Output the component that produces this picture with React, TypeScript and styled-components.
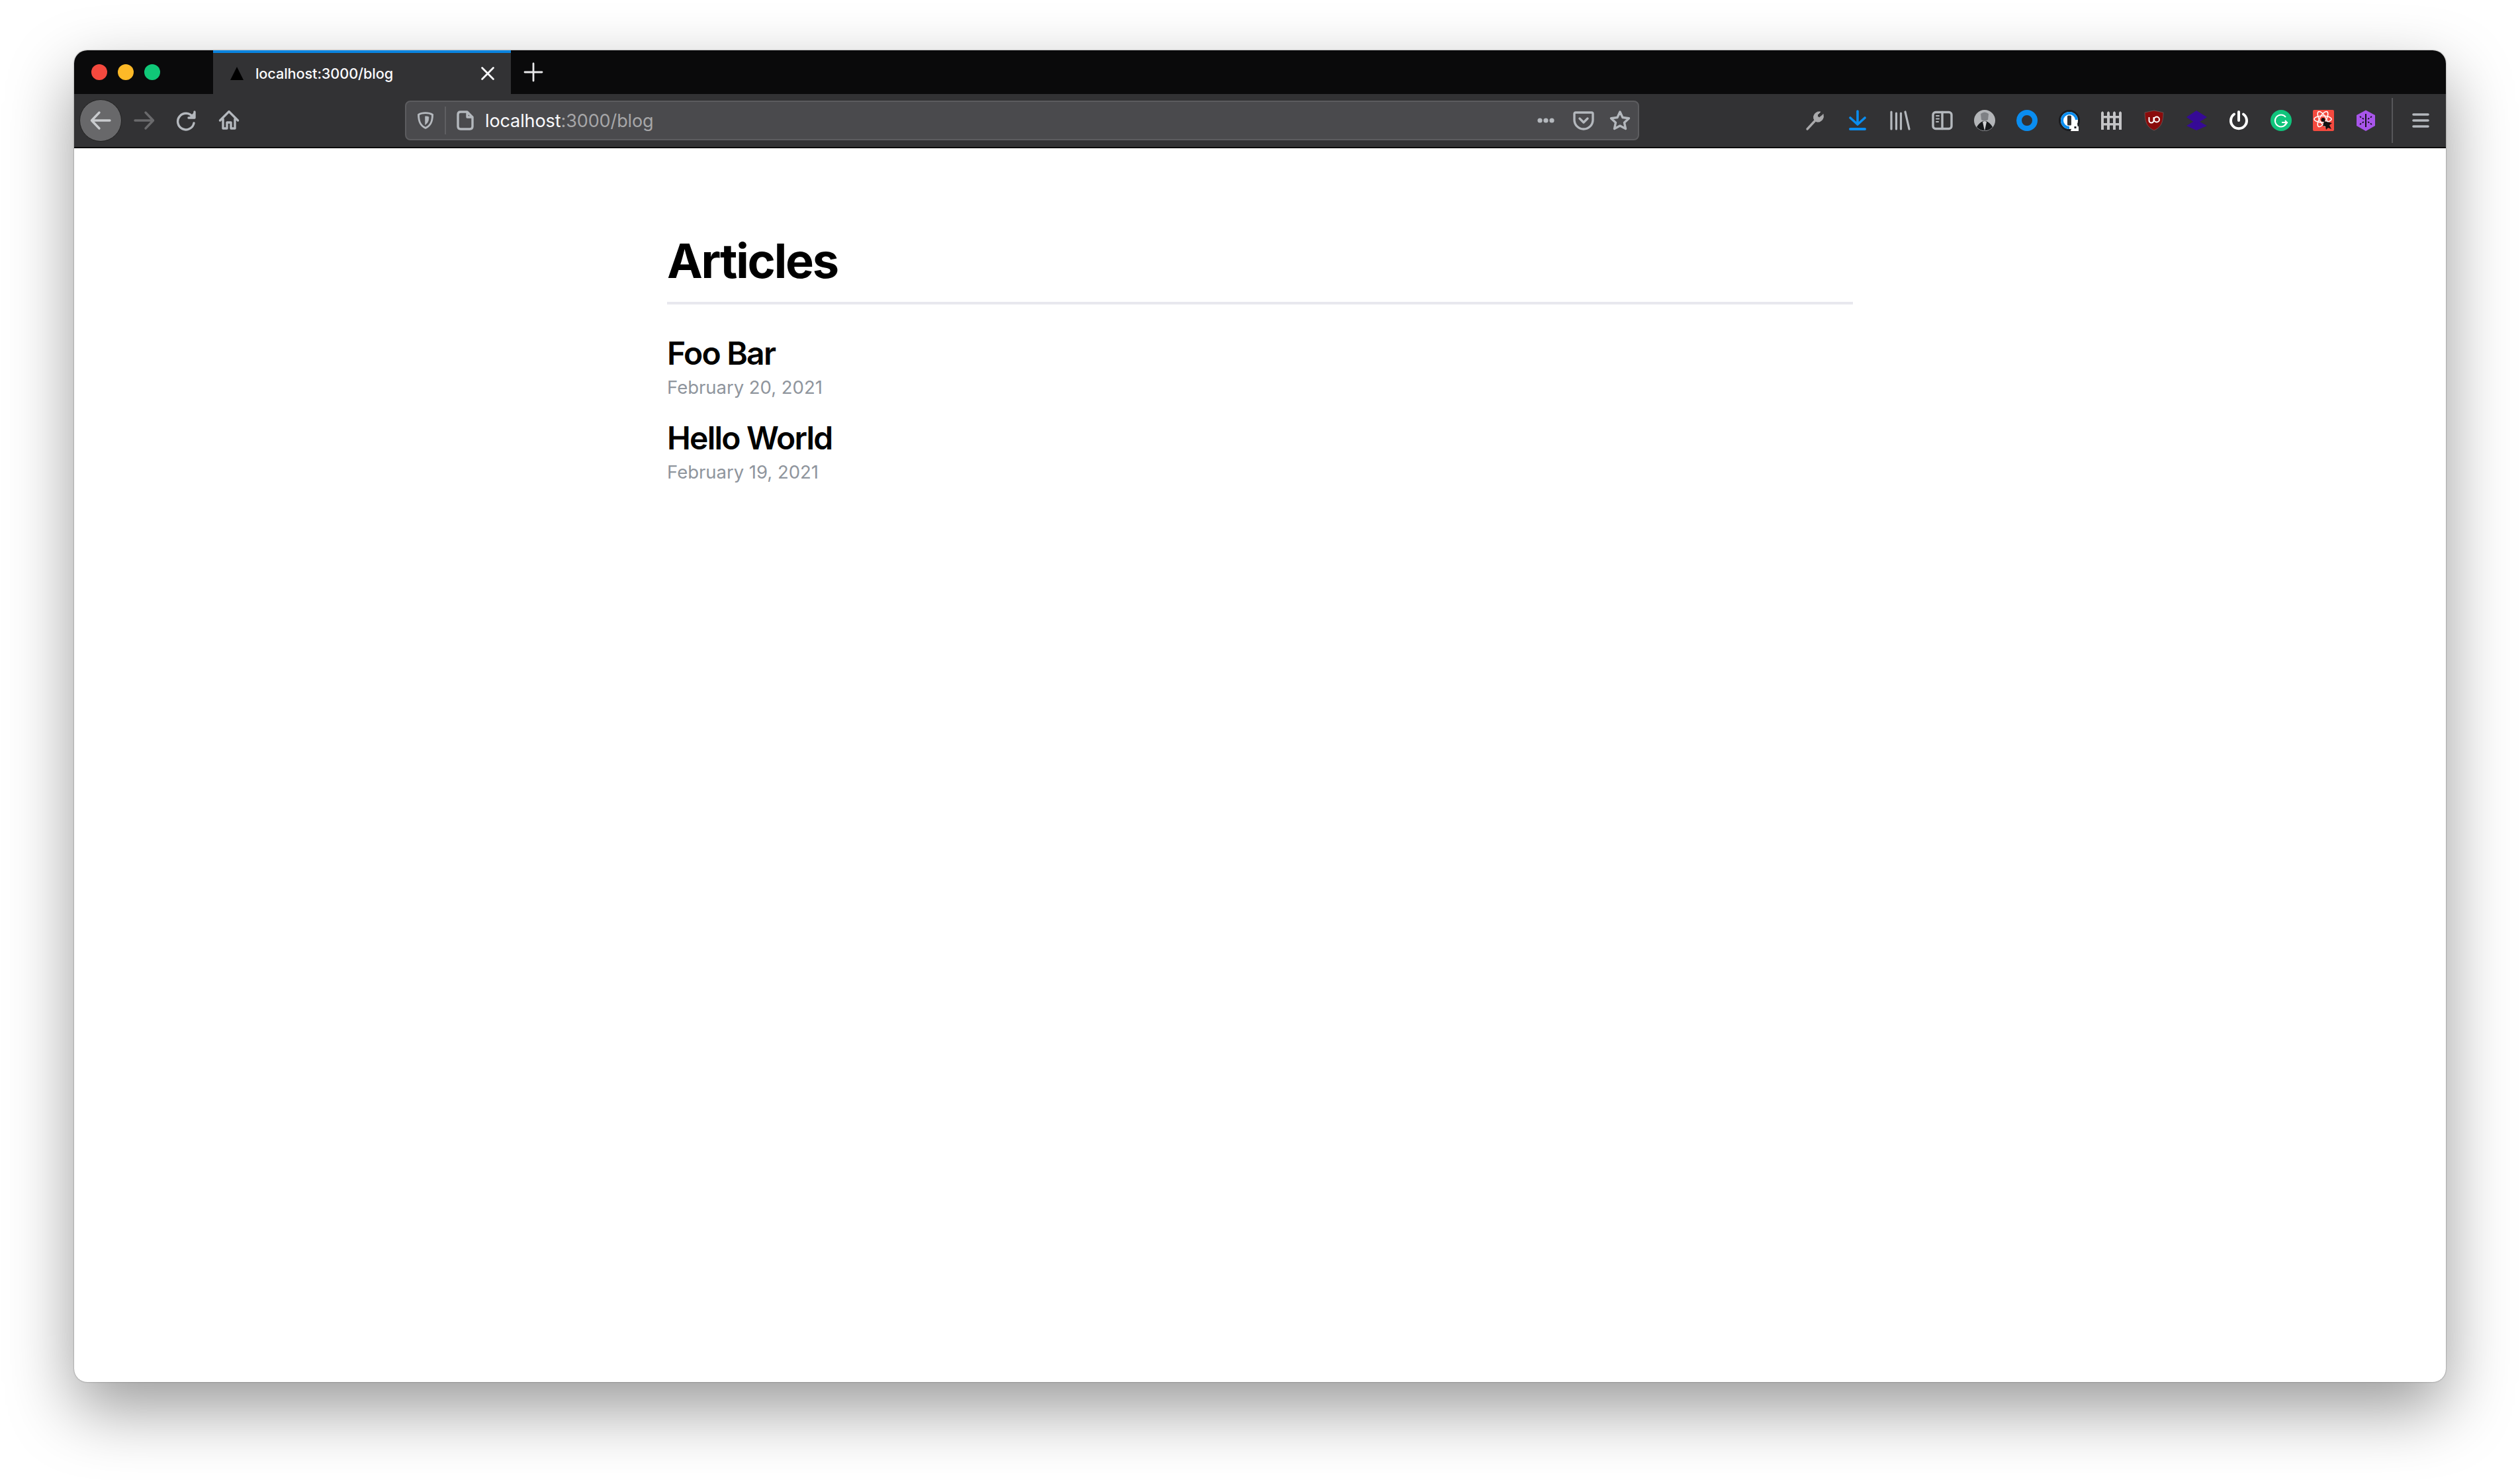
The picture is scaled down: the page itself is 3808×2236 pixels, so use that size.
import React from "react";
import styled, { createGlobalStyle } from "styled-components";

const Global = createGlobalStyle`
  html, body { margin: 0; padding: 0; background: #fff; }
  body { font-family: Inter, "Liberation Sans", sans-serif; }
  * { box-sizing: border-box; }
`;

const Page = styled.div`
  width: 3808px;
  height: 2236px;
  padding: 76px 112px 148px;
  background: #fff;
  overflow: hidden;
`;
const Window = styled.div`
  height: 2012px;
  display: flex;
  flex-direction: column;
  background: #fff;
  border-radius: 20px;
  overflow: hidden;
  box-shadow: 0 40px 100px rgba(0, 0, 0, 0.4), 0 0 2px rgba(0, 0, 0, 0.5);
`;
const TitleBar = styled.div`
  height: 66px;
  flex: none;
  display: flex;
  background: #0a0a0b;
`;
const Lights = styled.div`
  width: 210px;
  display: flex;
  align-items: center;
  gap: 16px;
  padding-left: 26px;
`;
const Light = styled.span<{ $c: string }>`
  width: 24px;
  height: 24px;
  border-radius: 50%;
  background: ${(p) => p.$c};
`;
const Tab = styled.div`
  width: 450px;
  display: flex;
  align-items: center;
  padding: 0 0 0 26px;
  background: #323234;
  border-top: 4px solid #0a84e0;
  color: #fbfbfe;
  font-size: 21.7px;
  font-weight: 500;
  letter-spacing: -0.1px;
`;
const TabTitle = styled.span`
  margin-left: 18px;
  flex: 1;
`;
const TabClose = styled.span`
  width: 30px;
  height: 30px;
  margin-right: 20px;
  display: flex;
`;
const NewTab = styled.span`
  width: 68px;
  display: flex;
  align-items: center;
  justify-content: center;
`;
const ToolBar = styled.div`
  height: 82px;
  flex: none;
  display: flex;
  align-items: center;
  padding: 0 6px 0 8px;
  background: #323234;
  border-bottom: 2px solid #0a0a0b;
`;
const BackButton = styled.span`
  width: 64px;
  height: 64px;
  flex: none;
  border-radius: 50%;
  background: #68686a;
  border: 1px solid #222;
  display: flex;
  align-items: center;
  justify-content: center;
  margin-right: 2px;
`;
const Cell = styled.span`
  width: 64px;
  height: 64px;
  flex: none;
  display: flex;
  align-items: center;
  justify-content: center;
`;
const UrlBar = styled.div`
  width: 1865px;
  height: 60px;
  margin: 0 234px;
  flex: none;
  display: flex;
  align-items: center;
  background: #4a4a4d;
  border: 2px solid #5c5c5f;
  border-radius: 8px;
`;
const UrlIcon = styled.span<{ $w: number }>`
  width: ${(p) => p.$w}px;
  flex: none;
  display: flex;
  align-items: center;
  justify-content: center;
`;
const UrlDivider = styled.span`
  width: 2px;
  height: 42px;
  background: #5f5f62;
  flex: none;
`;
const UrlText = styled.span`
  flex: 1;
  margin-left: 1px;
  font-size: 27px;
  color: #a6a6a8;
  letter-spacing: -0.1px;
`;
const UrlHost = styled.span`
  color: #fbfbfe;
`;
const ToolSep = styled.span`
  width: 2px;
  height: 68px;
  margin: 0 10px 0 7px;
  background: #57575a;
  flex: none;
`;
const Main = styled.main`
  flex: 1;
  width: 1792px;
  margin: 0 auto;
  color: #000;
`;
const Heading = styled.h1`
  margin: 0;
  padding: 130px 0 0;
  height: 236px;
  border-bottom: 4px solid #e8e8ee;
  font-size: 72px;
  line-height: 80px;
  font-weight: 700;
  letter-spacing: -2.2px;
`;
const Article = styled.article`
  display: flex;
  flex-direction: column;
  margin-bottom: 25px;
  &:first-of-type { margin-top: 44px; }
`;
const ArticleTitle = styled.h2`
  margin: 0;
  font-size: 48px;
  line-height: 60px;
  font-weight: 600;
  letter-spacing: -1.75px;
`;
const ArticleDate = styled.time`
  font-size: 27.5px;
  line-height: 43px;
  color: #8f959d;
  letter-spacing: -0.02px;
`;

type P = { children: React.ReactNode; s?: number; c?: string; w?: number };
const Ic = ({ children, s = 32, c = "#b4b8bd", w = 3.4 }: P) => (
  <svg width={s} height={s} viewBox="0 0 32 32" fill="none" stroke={c} strokeWidth={w} strokeLinecap="round" strokeLinejoin="round">
    {children}
  </svg>
);

export default function App() {
  return (
    <Page>
      <Global />
      <Window>
        <TitleBar>
          <Lights>
            <Light $c="#f4493e" />
            <Light $c="#fdb927" />
            <Light $c="#10c878" />
          </Lights>
          <Tab>
            <svg width="20" height="20" viewBox="0 0 20 20"><path d="M10 0 L20 20 H0 Z" fill="#000" /></svg>
            <TabTitle>localhost:3000/blog</TabTitle>
            <TabClose>
              <Ic s={30} c="#fbfbfe" w={3}><path d="M7 7 L25 25 M25 7 L7 25" /></Ic>
            </TabClose>
          </Tab>
          <NewTab>
            <Ic s={32} c="#e8e8ea" w={2.8}><path d="M16 3 V29 M3 16 H29" /></Ic>
          </NewTab>
        </TitleBar>
        <ToolBar>
          <BackButton>
            <Ic c="#c9cbce"><path d="M30 16 H2.5 M14 4 L2.5 16 L14 28" /></Ic>
          </BackButton>
          <Cell>
            <Ic c="#6a6a6c"><path d="M2 16 H29.5 M18 4 L29.5 16 L18 28" /></Ic>
          </Cell>
          <Cell>
            <Ic><path d="M25 10.5 A12.3 12.3 0 1 0 27 20" /><path d="M28 3 V12 H19" fill="#b4b8bd" /></Ic>
          </Cell>
          <Cell>
            <Ic><path d="M2.5 16 L16 2.5 L29.5 16 M7 13 V28 H13 V19 H19 V28 H25 V13" /></Ic>
          </Cell>
          <UrlBar>
            <UrlIcon $w={58}>
              <Ic s={28}><path d="M16 3 C21 3 25 4 28 6 C28 18 25 25 16 29 C7 25 4 18 4 6 C7 4 11 3 16 3 Z" /><path d="M16 9 C18 9 20 9 21.5 10 C21.5 16 20 20 16 23 Z" fill="#b4b8bd" strokeWidth={1} /></Ic>
            </UrlIcon>
            <UrlDivider />
            <UrlIcon $w={58}>
              <Ic s={32}><path d="M19 3 H9 Q5 3 5 7 V25 Q5 29 9 29 H23 Q27 29 27 25 V11 Z M19 3 V11 H27" /></Ic>
            </UrlIcon>
            <UrlText><UrlHost>localhost</UrlHost>:3000/blog</UrlText>
            <UrlIcon $w={58}>
              <Ic c="#b4b8bd" w={0}><circle cx="7" cy="16" r="3.6" fill="#b4b8bd" /><circle cx="16" cy="16" r="3.6" fill="#b4b8bd" /><circle cx="25" cy="16" r="3.6" fill="#b4b8bd" /></Ic>
            </UrlIcon>
            <UrlIcon $w={56}>
              <Ic><path d="M4 4 H28 Q30 4 30 6 V15 A14 14 0 0 1 2 15 V6 Q2 4 4 4 Z" /><path d="M10 13 L16 19 L22 13" /></Ic>
            </UrlIcon>
            <UrlIcon $w={54}>
              <Ic><path d="M16 3 L20 11.5 L29.5 12.7 L22.5 19.2 L24.5 28.5 L16 24 L7.5 28.5 L9.5 19.2 L2.5 12.7 L12 11.5 Z" /></Ic>
            </UrlIcon>
          </UrlBar>
          <Cell>
            <Ic c="#a9a9ab"><path d="M4 29 L17 15" strokeWidth={3.4} /><path d="M28 7 L22.5 11.5 L19.5 10.5 L19.5 7.5 L24 3 A8.5 8.5 0 0 0 14 14 L18 18 A8.5 8.5 0 0 0 28 7 Z" fill="#a9a9ab" strokeWidth={1} /></Ic>
          </Cell>
          <Cell>
            <Ic c="#0a8df0" w={3.6}><path d="M16 2 V21 M5 12 L16 22 L27 12" /><path d="M5 29 H27" strokeWidth={4} /></Ic>
          </Cell>
          <Cell>
            <Ic w={3.2}><path d="M3 3 V29 M10.5 5 V29 M17.5 5 V29 M24 3 L30 29" /></Ic>
          </Cell>
          <Cell>
            <Ic><rect x="2" y="3.5" width="28" height="25" rx="4" /><path d="M16 3.5 V28.5" /><path d="M7 9 H11 M7 13.5 H11 M7 18 H10" strokeWidth={2} /></Ic>
          </Cell>
          <Cell>
            <svg width="32" height="32" viewBox="0 0 32 32">
              <circle cx="16" cy="16" r="16" fill="#b3b5b8" />
              <path d="M10 6 Q16 1 22 6 L21 15 Q16 18 11 15 Z" fill="#7e8084" />
              <path d="M4 26 Q8 19 14 17 L16 22 L18 17 Q24 19 28 26 A16 16 0 0 1 4 26 Z" fill="#17191c" />
              <path d="M13 18 L16 32 L19 18 Z" fill="#cfd0d2" />
            </svg>
          </Cell>
          <Cell>
            <svg width="32" height="32" viewBox="0 0 32 32"><circle cx="16" cy="16" r="12" fill="none" stroke="#0a8df0" strokeWidth={8} /></svg>
          </Cell>
          <Cell>
            <svg width="32" height="32" viewBox="0 0 32 32">
              <circle cx="16" cy="16" r="16" fill="#1a1c20" />
              <circle cx="16" cy="16" r="13" fill="#fff" />
              <path d="M16 5 A11 11 0 1 0 16 27" fill="none" stroke="#0a8df0" strokeWidth={4} />
              <path d="M16 5 A11 11 0 0 1 27 15" fill="none" stroke="#0a8df0" strokeWidth={4} />
              <rect x="13" y="8.5" width="6" height="15" rx="1.5" fill="#333" />
              <path d="M18 32 L20 25 H21.5 V23.5 A3.5 3.5 0 0 1 28.5 23.5 V25 H30 V32 Z" fill="#fff" />
              <rect x="23.5" y="25" width="3" height="3" fill="#1a1c20" />
            </svg>
          </Cell>
          <Cell>
            <svg width="32" height="32" viewBox="0 0 32 32" fill="#c4c4c6">
              <path d="M0 4 L2 2 L4 4 V30 H0 Z M9 4 L11 2 L13 4 V30 H9 Z M18 4 L20 2 L22 4 V30 H18 Z M27 4 L29 2 L31 4 V30 H27 Z" />
              <rect x="0" y="9" width="31" height="3.5" />
              <rect x="0" y="20" width="31" height="3.5" />
            </svg>
          </Cell>
          <Cell>
            <svg width="32" height="32" viewBox="0 0 32 32">
              <path d="M16 1 L30 4 C30 16 28 26 16 31 C4 26 2 16 2 4 Z" fill="#8a0b0b" stroke="#6c5a5a" strokeWidth={0.8} />
              <path d="M8.5 11 V16 A3.5 3.5 0 0 0 15.5 16 V11" fill="none" stroke="#fff" strokeWidth={2} />
              <circle cx="20" cy="14.5" r="4" fill="none" stroke="#fff" strokeWidth={2} />
            </svg>
          </Cell>
          <Cell>
            <svg width="32" height="32" viewBox="0 0 32 32" fill="#360a96">
              <path d="M16 15 L32 24 L16 31 L1 24 Z" />
              <path d="M16 1 L32 11 L16 21 L1 11 Z" />
            </svg>
          </Cell>
          <Cell>
            <Ic c="#fff" w={4}><path d="M16 3 V16" /><path d="M9 6.5 A12 12 0 1 0 23 6.5" /></Ic>
          </Cell>
          <Cell>
            <svg width="32" height="32" viewBox="0 0 32 32">
              <circle cx="16" cy="16" r="16" fill="#10c47c" />
              <path d="M23 11 A9 9 0 1 0 24.5 19 H17" fill="none" stroke="#fff" strokeWidth={2} />
              <path d="M22 16 L25 19.5 L21.5 22.5" fill="none" stroke="#fff" strokeWidth={2} />
            </svg>
          </Cell>
          <Cell>
            <svg width="32" height="32" viewBox="0 0 32 32">
              <rect width="32" height="32" rx="2" fill="#f44a3f" />
              <g fill="none" stroke="#fff" strokeWidth={1.5}>
                <ellipse cx="15" cy="14" rx="13" ry="5" />
                <ellipse cx="15" cy="14" rx="13" ry="5" transform="rotate(60 15 14)" />
                <ellipse cx="15" cy="14" rx="13" ry="5" transform="rotate(120 15 14)" />
              </g>
              <circle cx="15.5" cy="15" r="3" fill="#111" />
              <path d="M17 17 L29 20 L25 23 L28 29 L23 27 L20 30 L19 25 L15 24 Z" fill="#111" />
            </svg>
          </Cell>
          <Cell>
            <svg width="32" height="32" viewBox="0 0 32 32">
              <path d="M16 0.5 L30 8 V24 L16 32 L2 24 V8 Z" fill="#a855ea" />
              <path d="M16 6 V26" stroke="#15101c" strokeWidth={2} />
              <path d="M7 10 L13 14 M25 10 L19 14 M7 22 L13 18 M25 22 L19 18" stroke="#15101c" strokeWidth={1.8} strokeDasharray="2.5 2" />
            </svg>
          </Cell>
          <ToolSep />
          <Cell>
            <Ic w={3.6} s={32}><path d="M5 7 H27 M5 16 H27 M5 25 H27" /></Ic>
          </Cell>
        </ToolBar>
        <Main>
          <Heading>Articles</Heading>
          <Article>
            <ArticleTitle>Foo Bar</ArticleTitle>
            <ArticleDate>February 20, 2021</ArticleDate>
          </Article>
          <Article>
            <ArticleTitle>Hello World</ArticleTitle>
            <ArticleDate>February 19, 2021</ArticleDate>
          </Article>
        </Main>
      </Window>
    </Page>
  );
}
